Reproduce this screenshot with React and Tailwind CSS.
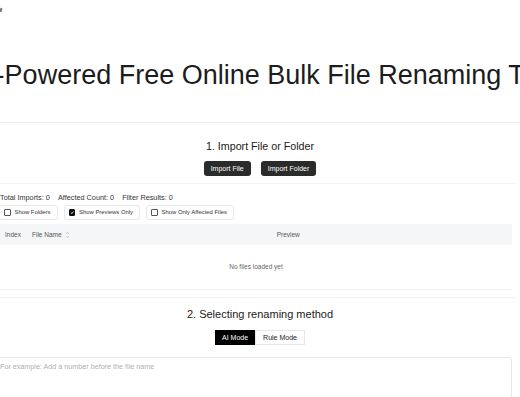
import React from 'react';

const font = { fontFamily: '"Liberation Sans", Arial, sans-serif' };

const CheckChip = ({ label, checked }) => (
  <div className="flex items-center gap-[4px] h-[15px] pl-[4px] pr-[6px] border border-[#e5e7eb] rounded-[3px] bg-white">
    <span
      className={`w-[6.5px] h-[6.5px] rounded-[1px] border flex items-center justify-center ${
        checked ? 'bg-[#111] border-[#111]' : 'bg-white border-[#555]'
      }`}
    >
      {checked && (
        <svg width="5" height="5" viewBox="0 0 10 10">
          <path d="M2 5.2 L4.2 7.3 L8 2.8" stroke="#fff" strokeWidth="1.8" fill="none" />
        </svg>
      )}
    </span>
    <span className="text-[5.9px] text-[#333] leading-none">{label}</span>
  </div>
);

export default function App() {
  return (
    <div className="w-[520px] h-[397px] overflow-hidden bg-white text-[#1a1a1a] relative" style={font}>
      {/* stray mark top-left */}
      <div className="absolute left-0 top-[8px] w-[2px] h-[4px] bg-[#777] rotate-12" />

      {/* hero title */}
      <div className="h-[123px] flex items-center justify-center border-b border-[#eeeeee]">
        <h1 className="whitespace-nowrap text-[27px] font-normal leading-none text-[#1c1c1c] ml-[8px] mt-[28px]">
          AI-Powered Free Online Bulk File Renaming Tool
        </h1>
      </div>

      <div className="-ml-[4px] w-[520px]">
        {/* section 1 */}
        <div className="flex flex-col items-center pt-[18px] pb-[7px] border-b border-[#f3f3f3]">
          <h2 className="text-[10.7px] leading-none pl-[8px]">1. Import File or Folder</h2>
          <div className="flex gap-[10px] mt-[9px] pl-[8px]">
            <button className="h-[15px] px-[7px] rounded-[3px] bg-[#2b2b2b] text-white text-[7px] leading-none">
              Import File
            </button>
            <button className="h-[15px] px-[7px] rounded-[3px] bg-[#2b2b2b] text-white text-[7px] leading-none">
              Import Folder
            </button>
          </div>
        </div>

        {/* stats */}
        <div className="pl-[4px] pt-[10px]">
          <div className="flex gap-[8px] text-[7.3px] text-[#333] leading-none">
            <span>Total Imports: 0</span>
            <span>Affected Count: 0</span>
            <span>Filter Results: 0</span>
          </div>
          <div className="flex gap-[6px] mt-[4px] -ml-[1px]">
            <CheckChip label="Show Folders" />
            <CheckChip label="Show Previews Only" checked />
            <CheckChip label="Show Only Affected Files" />
          </div>
        </div>

        {/* table */}
        <div className="mt-[4px] mr-[4px] border-b border-[#f0f0f0]">
          <div className="h-[21px] bg-[#f5f6f7] flex items-center text-[6.5px] text-[#555]">
            <span className="w-[36px] pl-[9px]">Index</span>
            <span className="flex items-center gap-[3px]">
              File Name
              <svg width="5" height="8" viewBox="0 0 5 8">
                <path d="M0.8 3 L2.5 1.2 L4.2 3" stroke="#bbb" strokeWidth="0.8" fill="none" />
                <path d="M0.8 5 L2.5 6.8 L4.2 5" stroke="#bbb" strokeWidth="0.8" fill="none" />
              </svg>
            </span>
            <span className="ml-[207px]">Preview</span>
          </div>
          <div className="h-[44px] flex items-center justify-center text-[6.5px] text-[#666] pl-[4px]">
            No files loaded yet
          </div>
        </div>

        {/* section 2 */}
        <div className="mt-[7px] border-t border-[#f0f0f0] flex flex-col items-center pt-[11px] pb-[12px]">
          <h2 className="text-[11px] leading-none pl-[8px]">2. Selecting renaming method</h2>
          <div className="flex mt-[10px] pl-[8px]">
            <button className="h-[15px] px-[7px] bg-black text-white text-[7px] leading-none">AI Mode</button>
            <button className="h-[15px] px-[7px] border border-[#e5e7eb] bg-white text-[#222] text-[7px] leading-none">
              Rule Mode
            </button>
          </div>
        </div>

        {/* textarea */}
        <div className="mr-[4px] h-[60px] border border-[#e5e7eb] rounded-[3px] pl-[3px] pt-[4px] text-[7.2px] text-[#b0b0b0]">
          For example: Add a number before the file name
        </div>
      </div>
    </div>
  );
}
